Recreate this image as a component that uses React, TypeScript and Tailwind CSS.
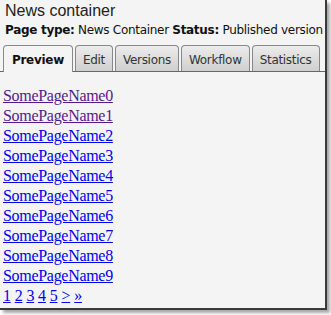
const tabs = ["Preview", "Edit", "Versions", "Workflow", "Statistics"];
const pages = Array.from({ length: 10 }, (_, i) => `SomePageName${i}`);

export default function App() {
  return (
    <div className="w-[331px] h-[315px] bg-white">
      <div className="w-[327px] h-[310px] bg-[#f4f4f4] border-r-2 border-b-2 border-[#3a3a3a] shadow-[3px_3px_3px_rgba(0,0,0,0.35)] overflow-hidden">
        <div className="px-[5px] pt-[1px] text-[#111]">
          <h1 className="font-['Liberation_Sans',sans-serif] text-[16px] leading-[20px] text-[#222]">News container</h1>
          <p className="mt-[2px] font-['DejaVu_Sans',sans-serif] text-[12px] leading-[14px] tracking-[-0.3px] whitespace-nowrap">
            <b>Page type:</b> News Container <b>Status:</b> Published version
          </p>
        </div>

        {/* Tabs */}
        <div className="mt-[8px] flex items-end gap-[2px] pl-[3px] border-b border-[#666] font-['DejaVu_Sans',sans-serif] text-[12px] tracking-[-0.3px]">
          {tabs.map((t, i) => (
            <div
              key={t}
              className={
                i === 0
                  ? "h-[27px] px-[8px] pt-[2px] flex items-center rounded-t-[4px] border border-b-0 border-[#888] bg-[#f4f4f4] font-bold text-[#111] -mb-px"
                  : "h-[26px] px-[7px] pt-[2px] flex items-center rounded-t-[4px] border border-b-0 border-[#888] bg-gradient-to-b from-[#ececec] to-[#cfcfcf] text-[#333]"
              }
            >
              {t}
            </div>
          ))}
        </div>

        <div className="pl-[3px] pt-[14px] font-['Liberation_Serif',serif] text-[16px] leading-[20px] tracking-[-0.3px]">
          {pages.map((p, i) => (
            <div key={p}>
              <a href="#" className={i < 2 ? "underline text-[#551a8b]" : "underline text-[#0000ee]"}>
                {p}
              </a>
            </div>
          ))}
          <div className="flex gap-[4px] text-[#0000ee]">
            {["1", "2", "3", "4", "5", ">", "»"].map((n) => (
              <a key={n} href="#" className="underline">
                {n}
              </a>
            ))}
          </div>
        </div>
      </div>
    </div>
  );
}
